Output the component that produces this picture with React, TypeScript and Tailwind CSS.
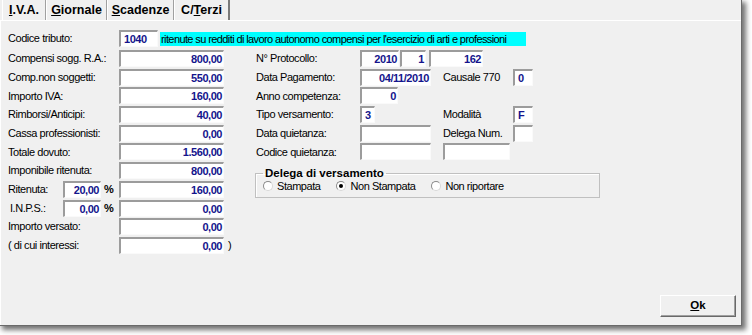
import React from 'react';

const boxBase =
  'bg-white h-[17px] border-t-2 border-l-2 border-b border-r border-t-[#9c9c9c] border-l-[#9c9c9c] border-b-[#fafafa] border-r-[#fafafa] font-bold text-[11px] leading-[14px] text-[#14148c] px-[1px] whitespace-nowrap overflow-hidden';

const Box: React.FC<{ w: string; v?: string; left?: boolean }> = ({ w, v = '', left }) => (
  <div className={`${boxBase} ${w} ${left ? 'text-left pl-[3px]' : 'text-right'}`}>{v}</div>
);

const Row: React.FC<{ label: string; lw?: string; children: React.ReactNode }> = ({ label, lw = 'w-[111px]', children }) => (
  <div className="flex items-center h-[17px]">
    <div className={`${lw} shrink-0 whitespace-nowrap`}>{label}</div>
    {children}
  </div>
);

const Radio: React.FC<{ label: string; on?: boolean }> = ({ label, on }) => (
  <div className="flex items-center">
    <span className="w-[10px] h-[10px] rounded-full bg-white border border-t-[#8a8a8a] border-l-[#8a8a8a] border-b-[#d8d8d8] border-r-[#d8d8d8] flex items-center justify-center">
      {on && <span className="w-[4px] h-[4px] rounded-full bg-black" />}
    </span>
    <span className="ml-[4px]">{label}</span>
  </div>
);

const tabs = [
  { k: 'I', rest: '.V.A.', w: 'w-[44px]' },
  { k: 'G', rest: 'iornale', w: 'w-[61px]' },
  { k: 'S', rest: 'cadenze', w: 'w-[67px]' },
];

const App: React.FC = () => {
  return (
    <div className="w-[752px] h-[335px] bg-white font-['Liberation_Sans',Arial,sans-serif] text-[11px] tracking-[-0.45px] text-black">
      <div className="w-[742px] h-[326px] bg-[#f0f0f0] border-r border-b border-[#6a6a6a] shadow-[3px_3px_5px_1px_rgba(0,0,0,0.55)] flex flex-col">
        {/* tab strip */}
        <div className="flex h-[20px] pl-[2px] text-[12.5px] font-bold tracking-normal">
          {tabs.map((t) => (
            <div key={t.k} className={`${t.w} flex items-center justify-center border-l border-white border-r border-r-[#a0a0a0]`}>
              <span>
                <span className="underline">{t.k}</span>
                {t.rest}
              </span>
            </div>
          ))}
          <div className="w-[56px] flex items-center justify-center border-l border-white border-r-2 border-r-[#7a7a7a]">
            <span>
              C/<span className="underline">T</span>erzi
            </span>
          </div>
        </div>

        {/* tab page */}
        <div className="flex-1 border-t border-l border-white flex flex-col pl-[7px] pt-[9px]">
          <div className="flex items-center h-[17px]">
            <div className="w-[111px] shrink-0">Codice tributo:</div>
            <Box w="w-[39px]" v="1040" left />
            <div className="ml-[2px] w-[366px] h-[14px] bg-[#00ffff] leading-[14px] pl-[1px] whitespace-nowrap tracking-[-0.6px]">
              ritenute su redditi di lavoro autonomo compensi per l'esercizio di arti e professioni
            </div>
          </div>

          <div className="flex mt-[3px]">
            {/* left column */}
            <div className="w-[248px] flex flex-col gap-[1.7px]">
              <Row label="Compensi sogg. R.A.:"><Box w="w-[105px]" v="800,00" /></Row>
              <Row label="Comp.non soggetti:"><Box w="w-[105px]" v="550,00" /></Row>
              <Row label="Importo IVA:"><Box w="w-[105px]" v="160,00" /></Row>
              <Row label="Rimborsi/Anticipi:"><Box w="w-[105px]" v="40,00" /></Row>
              <Row label="Cassa professionisti:"><Box w="w-[105px]" v="0,00" /></Row>
              <Row label="Totale dovuto:"><Box w="w-[105px]" v="1.560,00" /></Row>
              <Row label="Imponibile ritenuta:"><Box w="w-[105px]" v="800,00" /></Row>
              <Row label="Ritenuta:" lw="w-[55px]">
                <Box w="w-[38px]" v="20,00" />
                <div className="w-[18px] pl-[3px] font-bold">%</div>
                <Box w="w-[105px]" v="160,00" />
              </Row>
              <Row label="I.N.P.S.:" lw="w-[55px] pl-[2px]">
                <Box w="w-[38px]" v="0,00" />
                <div className="w-[18px] pl-[3px] font-bold">%</div>
                <Box w="w-[105px]" v="0,00" />
              </Row>
              <Row label="Importo versato:"><Box w="w-[105px]" v="0,00" /></Row>
              <Row label="( di cui interessi:">
                <Box w="w-[105px]" v="0,00" />
                <span className="ml-[4px]">)</span>
              </Row>
            </div>

            {/* right column */}
            <div className="flex flex-col gap-[1.7px]">
              <Row label="N° Protocollo:" lw="w-[104px]">
                <Box w="w-[39px]" v="2010" />
                <div className="ml-[1px]"><Box w="w-[26px]" v="1" /></div>
                <div className="ml-[3px]"><Box w="w-[54px]" v="162" /></div>
              </Row>
              <Row label="Data Pagamento:" lw="w-[104px]">
                <div className="w-[83px]"><Box w="w-[71px]" v="04/11/2010" /></div>
                <div className="w-[70px]">Causale 770</div>
                <Box w="w-[20px]" v="0" left />
              </Row>
              <Row label="Anno competenza:" lw="w-[104px]">
                <Box w="w-[38px]" v="0" />
              </Row>
              <Row label="Tipo versamento:" lw="w-[104px]">
                <div className="w-[83px]"><Box w="w-[15px]" v="3" left /></div>
                <div className="w-[70px]">Modalità</div>
                <Box w="w-[20px]" v="F" left />
              </Row>
              <Row label="Data quietanza:" lw="w-[104px]">
                <div className="w-[83px]"><Box w="w-[71px]" /></div>
                <div className="w-[70px]">Delega Num.</div>
                <Box w="w-[20px]" />
              </Row>
              <Row label="Codice quietanza:" lw="w-[104px]">
                <div className="w-[83px]"><Box w="w-[71px]" /></div>
                <Box w="w-[67px]" />
              </Row>

              <fieldset className="mt-[5px] -ml-[1px] w-[345px] border border-[#c0c0c0] shadow-[inset_1px_1px_0_#ffffff] px-[7px] pb-[5px]">
                <legend className="px-[2px] font-bold text-[11.5px] leading-[13px] tracking-normal">Delega di versamento</legend>
                <div className="flex items-center h-[12px] gap-[16px]">
                  <Radio label="Stampata" />
                  <Radio label="Non Stampata" on />
                  <Radio label="Non riportare" />
                </div>
              </fieldset>
            </div>
          </div>

          <div className="mt-auto flex justify-end pr-[5px] pb-[8px]">
            <button className="w-[76px] h-[22px] bg-[#f0f0f0] border border-t-white border-l-white border-b-[#696969] border-r-[#696969] shadow-[inset_-1px_-1px_0_#a0a0a0] font-bold text-[11.5px] tracking-normal">
              <span className="underline">O</span>k
            </button>
          </div>
        </div>
      </div>
    </div>
  );
};

export default App;
